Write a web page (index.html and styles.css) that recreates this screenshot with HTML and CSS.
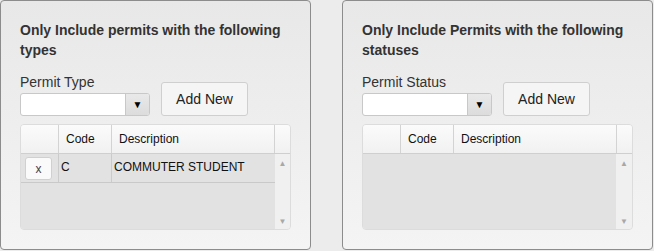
FILE: index.html
```html
<!DOCTYPE html>
<html lang="en">
<head>
    <meta charset="UTF-8">
    <meta name="viewport" content="width=device-width, initial-scale=1.0">
    <title>Permit Filters</title>
    <link rel="stylesheet" href="styles.css">
</head>
<body>

    <div class="page">

        <!-- Permit types -->
        <section class="panel">
            <h3 class="panel-title">Only Include permits with the following types</h3>
            <div class="picker">
                <div class="field">
                    <label class="field-label">Permit Type</label>
                    <div class="select">
                        <span class="select-value"></span>
                        <span class="select-arrow">&#9660;</span>
                    </div>
                </div>
                <button class="btn">Add New</button>
            </div>
            <div class="grid">
                <div class="grid-head">
                    <div class="cell"></div>
                    <div class="cell">Code</div>
                    <div class="cell">Description</div>
                    <div class="cell cell-last"></div>
                </div>
                <div class="grid-body">
                    <div class="grid-rows">
                        <div class="row">
                            <div class="cell"><button class="btn-remove">x</button></div>
                            <div class="cell">C</div>
                            <div class="cell">COMMUTER STUDENT</div>
                        </div>
                    </div>
                    <div class="scrollbar">
                        <span class="arrow">&#9650;</span>
                        <span class="arrow">&#9660;</span>
                    </div>
                </div>
            </div>
        </section>

        <!-- Permit statuses -->
        <section class="panel">
            <h3 class="panel-title">Only Include Permits with the following statuses</h3>
            <div class="picker">
                <div class="field">
                    <label class="field-label">Permit Status</label>
                    <div class="select">
                        <span class="select-value"></span>
                        <span class="select-arrow">&#9660;</span>
                    </div>
                </div>
                <button class="btn">Add New</button>
            </div>
            <div class="grid">
                <div class="grid-head">
                    <div class="cell"></div>
                    <div class="cell">Code</div>
                    <div class="cell">Description</div>
                    <div class="cell cell-last"></div>
                </div>
                <div class="grid-body">
                    <div class="grid-rows">
                        <!-- no statuses yet -->
                    </div>
                    <div class="scrollbar">
                        <span class="arrow">&#9650;</span>
                        <span class="arrow">&#9660;</span>
                    </div>
                </div>
            </div>
        </section>

    </div>

</body>
</html>
```

FILE: styles.css
```css
/* body */
body {
    margin: 0;
    padding: 0;
    font-family: 'Liberation Sans', Arial, sans-serif;
    color: #333;
    background-color: #ececec;
}

.page {
    display: flex;
    gap: 31px;
    height: 251px;
}

/* Panel */
.panel {
    box-sizing: border-box;
    width: 311px;
    height: 250px;
    padding: 19px 19px 0 19px;
    border: 1px solid #8c8c8c;
    border-radius: 4px;
    background: linear-gradient(to bottom, #e8e8e8, #f4f4f4);
}

.panel-title {
    margin: 0;
    font-size: 14px;
    font-weight: bold;
    line-height: 20px;
    color: #333;
}

/* Select + button row */
.picker {
    display: flex;
    align-items: flex-end;
    gap: 11px;
    margin-top: 14px;
}

.field {
    display: flex;
    flex-direction: column;
    width: 130px;
}

.field-label {
    font-size: 14px;
    line-height: 16px;
    margin-bottom: 3px;
    color: #333;
}

.select {
    display: flex;
    box-sizing: border-box;
    height: 23px;
    border: 1px solid #c8c8c8;
    border-radius: 3px;
    background-color: #fff;
    overflow: hidden;
}

.select-value {
    flex: 1;
}

.select-arrow {
    width: 23px;
    border-left: 1px solid #c8c8c8;
    background: linear-gradient(to bottom, #e9e9e9, #dcdcdc);
    font-size: 10px;
    line-height: 21px;
    text-align: center;
    color: #000;
}

.btn {
    box-sizing: border-box;
    width: 87px;
    height: 34px;
    border: 1px solid #cfcfcf;
    border-radius: 3px;
    background-color: #f5f5f5;
    font-family: inherit;
    font-size: 14px;
    color: #222;
}

/* Grid */
.grid {
    box-sizing: border-box;
    height: 106px;
    margin-top: 8px;
    border: 1px solid #dcdcdc;
    border-radius: 4px;
    overflow: hidden;
    display: flex;
    flex-direction: column;
    font-size: 12px;
    color: #111;
}

.grid-head {
    display: grid;
    grid-template-columns: 38px 53px 163px 1fr;
    height: 29px;
    border-bottom: 1px solid #cfcfcf;
    background: linear-gradient(to bottom, #fbfbfb, #f1f1f1);
    box-sizing: border-box;
}

.grid-head .cell {
    border-right: 1px solid #d3d3d3;
    padding-left: 7px;
    line-height: 28px;
}

.grid-head .cell-last {
    border-right: none;
}

.grid-body {
    flex: 1;
    display: flex;
    background-color: #e2e2e2;
}

.grid-rows {
    flex: 1;
}

.row {
    display: grid;
    grid-template-columns: 38px 53px 163px;
    height: 29px;
    box-sizing: border-box;
    border-bottom: 1px solid #c9c9c9;
}

.row .cell {
    border-right: 1px solid #cbcbcb;
    padding-left: 2px;
    line-height: 26px;
    white-space: nowrap;
}

.row .cell:first-child {
    padding: 3px 0 0 4px;
}

.row .cell:last-child {
    border-right: none;
}

.btn-remove {
    display: block;
    box-sizing: border-box;
    width: 27px;
    height: 23px;
    border: 1px solid #d0d0d0;
    border-radius: 3px;
    background-color: #fafafa;
    font-family: inherit;
    font-size: 12px;
    color: #444;
    padding: 0;
}

.scrollbar {
    width: 16px;
    display: flex;
    flex-direction: column;
    justify-content: space-between;
    align-items: center;
    padding: 5px 0 3px 0;
    background-color: #f0f0f0;
}

.arrow {
    font-size: 8px;
    color: #a8a8a8;
}
```
